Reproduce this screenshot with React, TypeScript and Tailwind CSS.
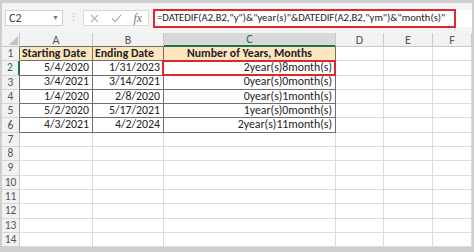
import React from 'react';

const cols = ['A', 'B', 'C', 'D', 'E', 'F'];
const widths = ['w-[73px]', 'w-[71px]', 'w-[172px]', 'w-[48px]', 'w-[49px]', 'w-[39px]'];

const data = [
    ['5/4/2020', '1/31/2023', '2year(s)8month(s)'],
    ['3/4/2021', '3/14/2021', '0year(s)0month(s)'],
    ['1/4/2020', '2/8/2020', '0year(s)1month(s)'],
    ['5/2/2020', '5/17/2021', '1year(s)0month(s)'],
    ['4/3/2021', '4/2/2024', '2year(s)11month(s)'],
];

const font = { fontFamily: 'Carlito, "Liberation Sans", sans-serif' };

export default function App() {
    const rows = Array.from({ length: 14 }, (_, i) => i + 1);

    return (
        <div
            className="w-[474px] h-[252px] bg-white border-t-[3px] border-l-2 border-r-2 border-b-[5px] border-[#cfcfcf] overflow-hidden text-[#222]"
            style={font}
        >
            {/* Formula bar */}
            <div className="h-[30px] bg-[#f4f4f4] flex items-center">
                <div className="ml-[3px] w-[58px] h-[16px] bg-white border border-[#d0d0d0] flex items-center justify-between px-[3px] text-[12px] text-[#444]">
                    <span>C2</span>
                    <span className="text-[7px] text-[#777]">▼</span>
                </div>
                <div className="w-[20px] flex justify-center text-[#b5b5b5] text-[11px]">⋮</div>
                <div className="w-[66px] h-[16px] bg-white border border-[#d8d8d8] flex items-center justify-around text-[#a8a8a8]">
                    <svg width="9" height="9" viewBox="0 0 10 10">
                        <path d="M1 1L9 9M9 1L1 9" stroke="currentColor" strokeWidth="1.2" />
                    </svg>
                    <svg width="11" height="9" viewBox="0 0 12 10">
                        <path d="M1 5L4.5 8.5L11 1" stroke="currentColor" strokeWidth="1.2" fill="none" />
                    </svg>
                    <span className="italic text-[12px] text-[#777]" style={{ fontFamily: '"Liberation Serif", serif' }}>fx</span>
                </div>
                <div className="ml-[4px] w-[303px] h-[19px] bg-white border-2 border-[#e0262f] flex items-center pl-[2px] text-[10.6px] text-[#222] whitespace-nowrap overflow-hidden">
                    =DATEDIF(A2,B2,"y")&amp;"year(s)"&amp;DATEDIF(A2,B2,"ym")&amp;"month(s)"
                </div>
                <div className="flex-1 h-[17px] bg-white" />
            </div>

            {/* Column headers */}
            <div className="flex h-[14px] bg-[#f2f2f2]">
                <div className="w-[18px] border-r border-b border-[#c8c8c8] relative">
                    <div className="absolute right-[1px] bottom-[1px] w-0 h-0 border-l-[9px] border-l-transparent border-b-[9px] border-b-[#c3c3c3]" />
                </div>
                {cols.map((c, i) => (
                    <div
                        key={c}
                        className={`${widths[i]} flex items-center justify-center text-[12px] border-r ${
                            c === 'C'
                                ? 'bg-[#d9d9d9] text-[#217346] border-b-2 border-b-[#217346] border-r-[#c8c8c8]'
                                : 'text-[#555] border-b border-[#c8c8c8]'
                        } ${c === 'A' || c === 'B' ? 'border-b-[#6f6f6f]' : ''}`}
                    >
                        {c}
                    </div>
                ))}
            </div>

            {/* Rows */}
            {rows.map((r) => {
                const inTable = r <= 6;
                const row = r >= 2 && r <= 6 ? data[r - 2] : null;
                return (
                    <div key={r} className="flex h-[14.3px]">
                        <div
                            className={`w-[18px] bg-[#f2f2f2] flex items-center justify-center text-[11.5px] border-b border-b-[#d6d6d6] ${
                                r === 2
                                    ? 'bg-[#d9d9d9] text-[#217346] border-r-2 border-r-[#217346]'
                                    : inTable
                                    ? 'text-[#555] border-r border-r-[#6f6f6f]'
                                    : 'text-[#555] border-r border-r-[#c8c8c8]'
                            }`}
                        >
                            {r}
                        </div>
                        {cols.map((c, i) => {
                            const tableCell = inTable && i < 3;
                            let content: React.ReactNode = null;
                            let cls = '';
                            if (r === 1 && i < 3) {
                                content = ['Starting Date', 'Ending Date', 'Number of Years, Months'][i];
                                cls = `bg-[#fde6bf] font-bold ${i === 2 ? 'justify-center' : 'justify-start pl-[2px]'}`;
                            } else if (row && i < 3) {
                                content = row[i];
                                cls = 'justify-end pr-[3px]';
                            }
                            return (
                                <div
                                    key={c}
                                    className={`${widths[i]} relative flex items-center text-[11.8px] whitespace-nowrap overflow-visible border-r border-b ${
                                        tableCell ? 'border-[#6f6f6f]' : 'border-[#dcdcdc]'
                                    } ${cls}`}
                                >
                                    {content}
                                    {r === 2 && c === 'C' && (
                                        <div className="absolute -left-[2px] -top-[1px] -right-[1px] -bottom-[1px] border-2 border-[#e0262f]" />
                                    )}
                                </div>
                            );
                        })}
                    </div>
                );
            })}
        </div>
    );
}
